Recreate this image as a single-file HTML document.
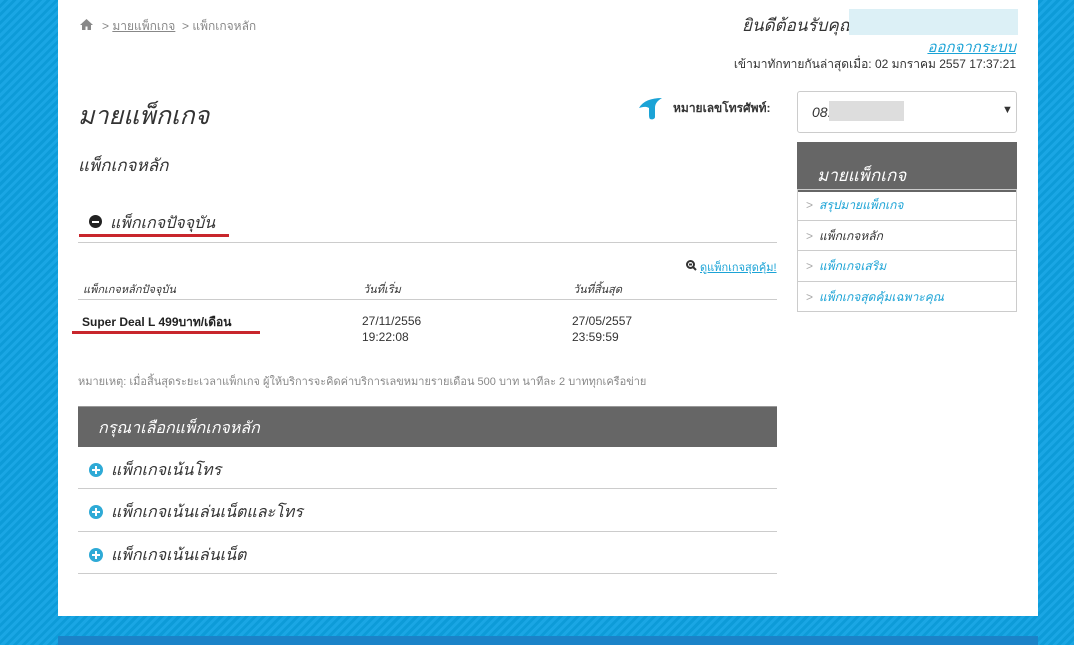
<!DOCTYPE html>
<html><head><meta charset="utf-8"><style>
*{margin:0;padding:0;box-sizing:border-box}
body{width:1074px;height:645px;overflow:hidden;font-family:"Liberation Sans","DejaVu Sans",sans-serif;color:#333;
background:repeating-linear-gradient(135deg,#1aa6e4 0 3px,#0d9bd8 3px 6px);position:relative}
.pan{position:absolute;left:58px;top:0;width:980px;height:616px;background:#fff}
.foot{position:absolute;left:58px;top:636px;width:980px;height:9px;background:#1b83c8}
.a{position:absolute;white-space:nowrap}
.hr{position:absolute;height:1px;background:#ccc}
.red{position:absolute;height:3px;background:#c8262c}
.lnk{color:#1ba3d6;text-decoration:underline}
.plus{display:inline-block;width:14px;height:14px;border-radius:50%;background:#2eaad6;position:relative;vertical-align:-2px;margin-right:8px}
.plus:before{content:"";position:absolute;left:3px;top:6px;width:8px;height:2px;background:#fff}
.plus:after{content:"";position:absolute;left:6px;top:3px;width:2px;height:8px;background:#fff}
.menu{position:absolute;left:797px;top:189px;width:220px;border:1px solid #ccc;border-top:none}
.menu div{height:30.5px;line-height:30px;border-top:1px solid #ccc;font-size:12px;font-style:italic;padding-left:8px;color:#1ba3d6}
.menu div span{color:#aaa;font-style:normal;margin-right:6px}
</style></head><body>
<div class="pan"></div><div class="foot"></div>
<svg class="a" style="left:80px;top:19px" width="13" height="11" viewBox="0 0 13 11"><path d="M6.5 0L0 6h2v5h3.5V7.5h2V11H11V6h2z" fill="#888"/></svg>
<div class="a" style="left:102px;top:17px;font-size:12px;color:#888">&gt; <span style="text-decoration:underline">มายแพ็กเกจ</span> &nbsp;&gt; แพ็กเกจหลัก</div>
<div class="a" style="left:742px;top:12px;font-size:17px;font-style:italic;color:#333">ยินดีต้อนรับคุณ</div>
<div class="a" style="left:849px;top:9px;width:169px;height:26px;background:#dcf0f6"></div>
<div class="a lnk" style="right:58px;top:35px;font-size:15px;font-style:italic">ออกจากระบบ</div>
<div class="a" style="right:58px;top:55px;font-size:12px;color:#333">เข้ามาทักทายกันล่าสุดเมื่อ: 02 มกราคม 2557 17:37:21</div>
<div class="a" style="left:78px;top:96px;font-size:25px;font-style:italic;color:#333">มายแพ็กเกจ</div>
<div class="a" style="left:78px;top:152px;font-size:17px;font-style:italic">แพ็กเกจหลัก</div>
<svg class="a" style="left:638px;top:96px" width="26" height="25" viewBox="0 0 26 25"><path d="M1 12C5 5 13 2 24 2c-5 3-7 6-7 10v9c0 2-3 3-5 2-1-1-1-3-1-5V12C8 10 4 11 1 12z" fill="#1ba3d6"/></svg>
<div class="a" style="left:673px;top:99px;font-size:12px;font-weight:bold;color:#333">หมายเลขโทรศัพท์:</div>
<div class="a" style="left:797px;top:91px;width:220px;height:42px;border:1px solid #ccc;border-radius:3px"></div>
<div class="a" style="left:812px;top:104px;font-size:14px;font-style:italic">08.</div>
<div class="a" style="left:829px;top:101px;width:75px;height:20px;background:#ddd"></div>
<div class="a" style="left:1002px;top:104px;font-size:11px">▼</div>
<div class="a" style="left:797px;top:142px;width:220px;height:50px;background:#666"></div>
<div class="a" style="left:817px;top:162px;font-size:17px;font-style:italic;color:#fff">มายแพ็กเกจ</div>
<div class="menu"><div><span>&gt;</span>สรุปมายแพ็กเกจ</div><div style="color:#333"><span>&gt;</span>แพ็กเกจหลัก</div><div><span>&gt;</span>แพ็กเกจเสริม</div><div><span>&gt;</span>แพ็กเกจสุดคุ้มเฉพาะคุณ</div></div>
<div class="a" style="left:89px;top:215px;width:13px;height:13px;border-radius:50%;background:#222"><div style="position:absolute;left:3px;top:5.5px;width:7px;height:2px;background:#fff"></div></div>
<div class="a" style="left:110px;top:211px;font-size:16px;font-style:italic">แพ็กเกจปัจจุบัน</div>
<div class="red" style="left:79px;top:234px;width:150px"></div>
<div class="hr" style="left:78px;top:242px;width:699px"></div>
<svg class="a" style="left:686px;top:260px" width="11" height="11" viewBox="0 0 11 11"><circle cx="4.5" cy="4.5" r="3.5" fill="none" stroke="#333" stroke-width="2"/><path d="M7 7l3 3M3 4.5h3" stroke="#333" stroke-width="2"/></svg>
<div class="a lnk" style="left:700px;top:258px;font-size:11px">ดูแพ็กเกจสุดคุ้ม!</div>
<div class="a" style="left:83px;top:280px;font-size:11px;font-style:italic">แพ็กเกจหลักปัจจุบัน</div>
<div class="a" style="left:363px;top:280px;font-size:11px;font-style:italic">วันที่เริ่ม</div>
<div class="a" style="left:573px;top:280px;font-size:11px;font-style:italic">วันที่สิ้นสุด</div>
<div class="hr" style="left:78px;top:299px;width:699px"></div>
<div class="a" style="left:82px;top:313px;font-size:12px;font-weight:bold;color:#222">Super Deal L 499บาท/เดือน</div>
<div class="red" style="left:72px;top:331px;width:188px"></div>
<div class="a" style="left:362px;top:313px;font-size:12px;line-height:16px">27/11/2556<br>19:22:08</div>
<div class="a" style="left:572px;top:313px;font-size:12px;line-height:16px">27/05/2557<br>23:59:59</div>
<div class="a" style="left:78px;top:372px;font-size:11px;color:#888">หมายเหตุ: เมื่อสิ้นสุดระยะเวลาแพ็กเกจ ผู้ให้บริการจะคิดค่าบริการเลขหมายรายเดือน 500 บาท นาทีละ 2 บาททุกเครือข่าย</div>
<div class="a" style="left:78px;top:406px;width:699px;height:41px;background:#666;border-top:1px solid #999"></div>
<div class="a" style="left:98px;top:416px;font-size:16px;font-style:italic;color:#fff">กรุณาเลือกแพ็กเกจหลัก</div>
<div class="a" style="left:89px;top:458px;font-size:16px;font-style:italic"><span class="plus"></span>แพ็กเกจเน้นโทร</div>
<div class="hr" style="left:78px;top:488px;width:699px"></div>
<div class="a" style="left:89px;top:500px;font-size:16px;font-style:italic"><span class="plus"></span>แพ็กเกจเน้นเล่นเน็ตและโทร</div>
<div class="hr" style="left:78px;top:531px;width:699px"></div>
<div class="a" style="left:89px;top:543px;font-size:16px;font-style:italic"><span class="plus"></span>แพ็กเกจเน้นเล่นเน็ต</div>
<div class="hr" style="left:78px;top:573px;width:699px"></div>
</body></html>
